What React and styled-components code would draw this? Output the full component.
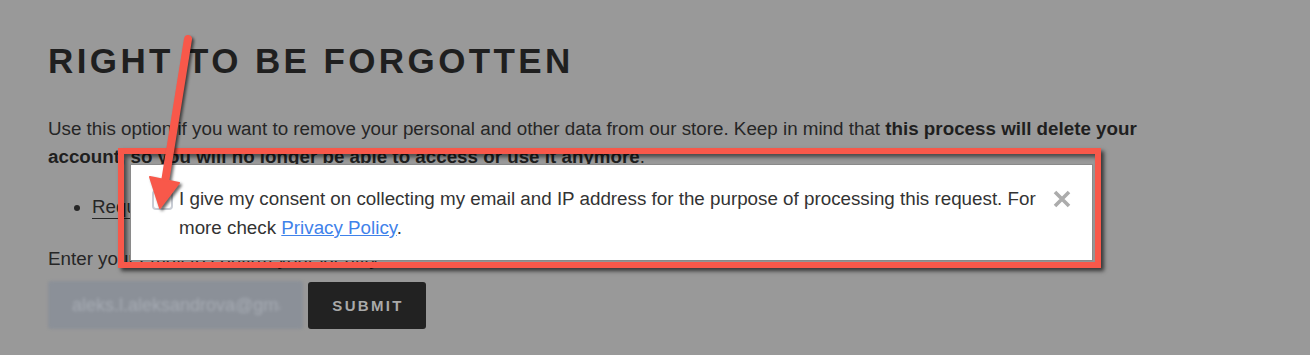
import React from 'react';
import styled, { createGlobalStyle } from 'styled-components';

const GlobalStyle = createGlobalStyle`
  html, body {
    margin: 0;
    padding: 0;
    background: #999999;
  }
  * {
    box-sizing: border-box;
  }
`;

// --- page behind the overlay ---

const Page = styled.div`
  position: relative;
  width: 1310px;
  height: 355px;
  overflow: hidden;
  background: #999999;
  padding: 39px 0 0 48px;
  font-family: 'Liberation Sans', Arial, sans-serif;
  color: #262626;
`;

const Title = styled.h1`
  margin: 0;
  font-size: 35px;
  line-height: 44px;
  font-weight: 700;
  letter-spacing: 3.4px;
  color: #1f1f1f;
`;

const Intro = styled.p`
  margin: 32px 0 0;
  width: 1095px;
  font-size: 18.8px;
  line-height: 28px;

  strong {
    color: #1f1f1f;
  }
`;

const Links = styled.ul`
  margin: 22px 0 0;
  padding-left: 44px;
  font-size: 18.8px;
  line-height: 28px;
`;

const LinkItem = styled.li`
  a {
    color: #262626;
    text-decoration: underline;
    text-underline-offset: 5px;
  }
`;

const Label = styled.div`
  margin-top: 24px;
  font-size: 18.8px;
  line-height: 28px;
`;

const FormRow = styled.div`
  margin-top: 8px;
  display: flex;
  gap: 5px;
  align-items: flex-start;
`;

const EmailField = styled.div`
  width: 255px;
  height: 48px;
  border-radius: 3px;
  background: #8b9098;
  padding: 0 0 0 24px;
  display: flex;
  align-items: center;
  overflow: hidden;
  white-space: nowrap;
  font-size: 18px;
  color: #a6abb3;
  filter: blur(1.4px);

  span {
    display: block;
    width: 208px;
    overflow: hidden;
  }
`;

const SubmitButton = styled.button`
  width: 118px;
  height: 47px;
  margin-top: 1px;
  border: none;
  border-radius: 3px;
  background: #222222;
  color: #a9a9a9;
  font-family: 'Liberation Sans', Arial, sans-serif;
  font-size: 15px;
  font-weight: 700;
  letter-spacing: 2.3px;
  padding: 0 0 0 2px;
`;

// --- annotation layer ---

const Frame = styled.div`
  position: absolute;
  left: 118px;
  top: 148px;
  width: 983px;
  height: 120px;
  border: 6px solid #f8584a;
  box-shadow: 3px 3px 4px rgba(0, 0, 0, 0.65), inset 3px 3px 4px rgba(0, 0, 0, 0.55);
`;

const Popup = styled.div`
  position: absolute;
  left: 130px;
  top: 164px;
  width: 963px;
  height: 97px;
  background: #ffffff;
  border: 1px solid #8a8a8a;
  padding: 19px 21px 0 21px;
  display: flex;
  align-items: flex-start;
  font-family: 'Liberation Sans', Arial, sans-serif;
`;

const Checkbox = styled.span`
  flex: none;
  width: 21px;
  height: 20px;
  margin-top: 6px;
  border: 2px solid #c9cdd5;
  border-radius: 4px;
  background: #fff;
`;

const ConsentText = styled.div`
  flex: 1;
  margin-left: 6px;
  padding-right: 6px;
  font-size: 18.8px;
  line-height: 29px;
  color: #333333;

  a {
    color: #3f82ea;
    text-decoration: underline;
  }
`;

const CloseButton = styled.button`
  flex: none;
  width: 18px;
  height: 18px;
  margin-top: 6px;
  padding: 0;
  border: none;
  background: none;
  display: flex;

  svg {
    display: block;
  }
`;

const Arrow = styled.svg`
  position: absolute;
  left: 0;
  top: 0;
  width: 1310px;
  height: 355px;
  pointer-events: none;
  filter: drop-shadow(2px 2px 1.5px rgba(0, 0, 0, 0.6));
`;

const App = () => (
  <>
    <GlobalStyle />
    <Page>
      <Title>RIGHT TO BE FORGOTTEN</Title>
      <Intro>
        Use this option if you want to remove your personal and other data from our store. Keep in
        mind that <strong>this process will delete your account, so you will no longer be able to
        access or use it anymore</strong>.
      </Intro>
      <Links>
        <LinkItem>
          <a href="#request">Request to remove account</a>
        </LinkItem>
      </Links>
      <Label>Enter your email to confirm your identity</Label>
      <FormRow>
        <EmailField>
          <span>aleks.l.aleksandrova@gmail.com</span>
        </EmailField>
        <SubmitButton type="button">SUBMIT</SubmitButton>
      </FormRow>

      <Frame />
      <Popup>
        <Checkbox />
        <ConsentText>
          I give my consent on collecting my email and IP address for the purpose of processing this
          request. For more check <a href="#privacy">Privacy Policy</a>.
        </ConsentText>
        <CloseButton type="button" aria-label="Close">
          <svg width="18" height="18" viewBox="0 0 18 18">
            <path d="M2 2 L16 16 M16 2 L2 16" stroke="#acacac" strokeWidth="3.6" />
          </svg>
        </CloseButton>
      </Popup>

      <Arrow viewBox="0 0 1310 355">
        <line x1="188" y1="39" x2="165" y2="182" stroke="#f8584a" strokeWidth="8" strokeLinecap="round" />
        <polygon points="150,177 179,183 160,208" fill="#f8584a" strokeLinejoin="round" stroke="#f8584a" strokeWidth="2" />
      </Arrow>
    </Page>
  </>
);

export default App;
